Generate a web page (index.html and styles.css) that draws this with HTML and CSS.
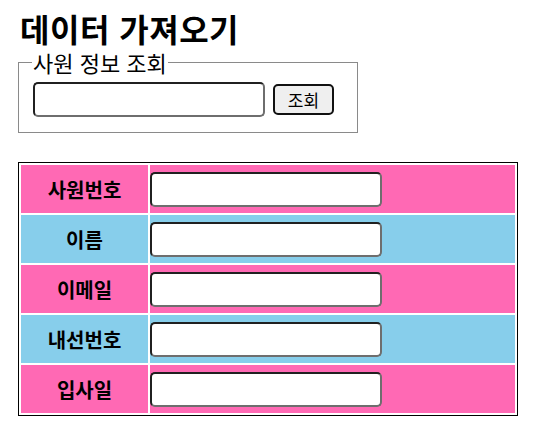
FILE: index.html
```html
<!DOCTYPE html>
<html lang="ko">
<head>
<meta charset="utf-8">
<title>데이터 가져오기</title>
<link rel="stylesheet" href="styles.css">
</head>
<body>
<div class="page">
  <h1 class="title">데이터 가져오기</h1>
  <fieldset class="search">
    <legend class="search-legend">사원 정보 조회</legend>
    <div class="search-row">
      <input class="field field-search" type="text">
      <button class="btn" type="button">조회</button>
    </div>
  </fieldset>
  <table class="info">
    <tr class="row-pink"><th class="label">사원번호</th><td class="value"><input class="field" type="text"></td></tr>
    <tr class="row-blue"><th class="label">이름</th><td class="value"><input class="field" type="text"></td></tr>
    <tr class="row-pink"><th class="label">이메일</th><td class="value"><input class="field" type="text"></td></tr>
    <tr class="row-blue"><th class="label">내선번호</th><td class="value"><input class="field" type="text"></td></tr>
    <tr class="row-pink"><th class="label">입사일</th><td class="value"><input class="field" type="text"></td></tr>
  </table>
</div>
</body>
</html>
```

FILE: styles.css
```css
html, body {
  margin: 0;
  padding: 0;
  background: #fff;
}
body {
  font-family: "Noto Sans CJK KR", "Noto Sans", sans-serif;
  color: #000;
}
.page {
  padding: 8px 0 0 18px;
}
.title {
  margin: 0 0 0 2px;
  font-size: 32px;
  line-height: 40px;
  font-weight: bold;
  letter-spacing: 0.5px;
}
.search {
  box-sizing: border-box;
  width: 340px;
  margin: 0;
  padding: 6px 14px 15px 14px;
  border: 1px solid #8a8a8a;
}
.search-legend {
  padding: 0 1px;
  margin-left: -1px;
  font-size: 22px;
  line-height: 28px;
}
.search-row {
  display: flex;
  align-items: center;
  gap: 8px;
}
.field {
  box-sizing: border-box;
  display: block;
  width: 232px;
  height: 35px;
  margin: 0;
  padding: 0 6px;
  background: #fff;
  border: 2px solid;
  border-color: #202020 #6e6e6e #6e6e6e #202020;
  border-radius: 5px;
  font: 16px "Noto Sans CJK KR", sans-serif;
}
.btn {
  box-sizing: border-box;
  width: 61px;
  height: 31px;
  margin: 0;
  padding: 0;
  background: #efefef;
  border: 2px solid #111;
  border-radius: 5px;
  font: 17px "Noto Sans CJK KR", sans-serif;
  color: #000;
}
.info {
  margin-top: 29px;
  width: 500px;
  border: 1px solid #000;
  border-spacing: 2px;
}
.label {
  width: 127px;
  height: 48px;
  padding: 0;
  font-size: 20px;
  font-weight: bold;
  text-align: center;
  vertical-align: middle;
}
.value {
  padding: 0;
  height: 48px;
  vertical-align: middle;
}
.row-pink .label, .row-pink .value {
  background: #ff69b4;
}
.row-blue .label, .row-blue .value {
  background: #87ceeb;
}
```
